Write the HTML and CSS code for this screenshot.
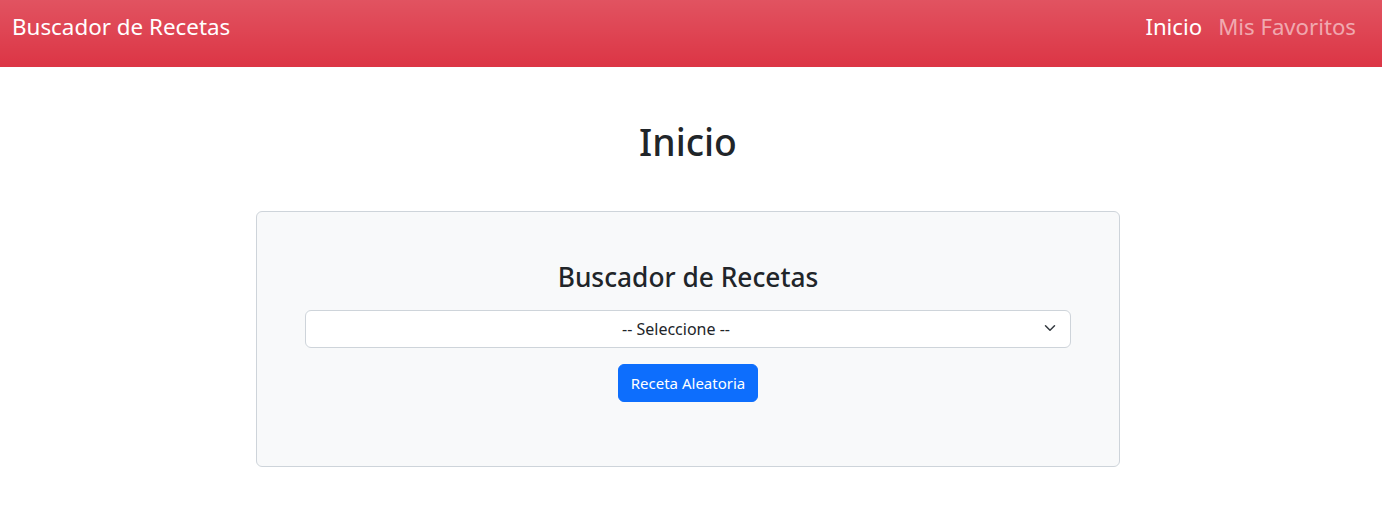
FILE: index.html
```html
<!DOCTYPE html>
<html lang="es">
<head>
<meta charset="utf-8">
<title>Buscador de Recetas</title>
<link rel="stylesheet" href="styles.css">
</head>
<body>
<nav class="navbar">
  <a class="brand" href="#">Buscador de Recetas</a>
  <div class="nav-links">
    <a class="nav-link active" href="#">Inicio</a>
    <a class="nav-link" href="#">Mis Favoritos</a>
  </div>
</nav>
<main class="main">
  <h1 class="page-title">Inicio</h1>
  <section class="card">
    <h3 class="card-title">Buscador de Recetas</h3>
    <div class="select-wrap">
      <select class="select">
        <option>-- Seleccione --</option>
      </select>
      <svg class="chevron" width="12" height="12" viewBox="0 0 16 16" aria-hidden="true"><path d="M2 5l6 6 6-6" fill="none" stroke="#343a40" stroke-width="2" stroke-linecap="round" stroke-linejoin="round"/></svg>
    </div>
    <button class="btn" type="button">Receta Aleatoria</button>
  </section>
</main>
</body>
</html>
```
FILE: styles.css
```css
* { box-sizing: border-box; }
html, body {
  margin: 0;
  padding: 0;
  background: #fff;
  color: #212529;
  font-family: "Noto Sans", "Open Sans", "Liberation Sans", sans-serif;
  font-size: 16px;
}
.navbar {
  height: 67px;
  display: flex;
  align-items: flex-start;
  justify-content: space-between;
  padding: 10px 26px 0 12px;
  background-color: #dc3545;
  background-image: linear-gradient(180deg, rgba(255,255,255,0.15), rgba(255,255,255,0));
}
.brand {
  color: #fff;
  text-decoration: none;
  font-size: 22.4px;
  line-height: 33.6px;
}
.nav-links {
  display: flex;
  gap: 16px;
}
.nav-link {
  color: rgba(255,255,255,0.55);
  text-decoration: none;
  font-size: 22.2px;
  line-height: 33.6px;
}
.nav-link.active { color: #fff; }
.main {
  display: flex;
  flex-direction: column;
  align-items: center;
  padding: 51px 6px 0 0;
}
.page-title {
  margin: 0 0 45px;
  font-size: 37.3px;
  line-height: 48px;
  font-weight: 500;
}
.card {
  width: 864px;
  background: #f8f9fa;
  border: 1px solid #ced4da;
  border-radius: 6px;
  padding: 48px 48px 64px;
  display: flex;
  flex-direction: column;
  align-items: center;
}
.card-title {
  margin: 0 0 16px;
  font-size: 26.3px;
  line-height: 34px;
  font-weight: 500;
}
.select-wrap {
  position: relative;
  width: 100%;
  margin-bottom: 16px;
}
.select {
  display: block;
  width: 100%;
  height: 38px;
  appearance: none;
  -webkit-appearance: none;
  background: #fff;
  border: 1px solid #ced4da;
  border-radius: 6px;
  padding: 0 36px 0 12px;
  font-family: inherit;
  font-size: 16px;
  color: #212529;
  text-align: center;
  text-align-last: center;
}
.chevron {
  position: absolute;
  right: 15px;
  top: 12px;
  pointer-events: none;
}
.btn {
  height: 38px;
  padding: 0 12px;
  border: 1px solid #0d6efd;
  border-radius: 6px;
  background: #0d6efd;
  color: #fff;
  font-family: inherit;
  font-size: 15px;
  line-height: 24px;
}
```
